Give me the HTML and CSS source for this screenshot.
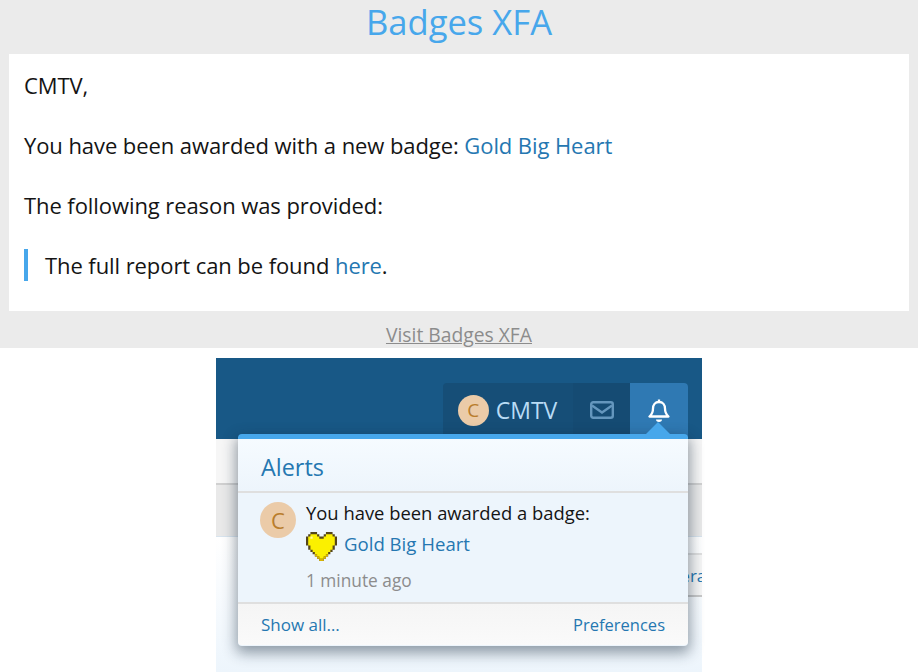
FILE: index.html
```html
<!DOCTYPE html>
<html lang="en">
<head>
  <meta charset="UTF-8">
  <title>Badges XFA</title>
  <link rel="stylesheet" href="styles.css">
</head>
<body>

<section class="email">
  <h1>Badges XFA</h1>
  <div class="email-body">
    <p>CMTV,</p>
    <p>You have been awarded with a new badge: <a href="#">Gold Big Heart</a></p>
    <p>The following reason was provided:</p>
    <blockquote>The full report can be found <a href="#">here</a>.</blockquote>
  </div>
  <a class="visit" href="#">Visit Badges XFA</a>
</section>

<section class="shot">
  <div class="site-header">
    <nav class="tabs">
      <a class="tab tab-user" href="#"><span class="avatar avatar-small">C</span>CMTV</a>
      <a class="tab tab-mail" href="#" aria-label="Inbox">
        <svg width="24" height="18" viewBox="0 0 24 18"><rect x="1.200" y="1.200" width="21.600" height="15.600" rx="2" fill="none" stroke="#6496bd" stroke-width="2.400"/><path d="M2 4.500l10 7 10-7" fill="none" stroke="#6496bd" stroke-width="2.400"/></svg>
      </a>
      <a class="tab tab-bell" href="#" aria-label="Alerts">
        <svg width="22" height="24" viewBox="0 0 22 24"><path d="M11 0.500v3M11 3c-4 0-6 3-6 6.500 0 4-1.200 6-3.500 8h19c-2.300-2-3.500-4-3.500-8C17 6 15 3 11 3z" fill="none" stroke="#fff" stroke-width="2.300" stroke-linejoin="round"/><path d="M8 20.500h6c0 1.500-1 2.500-3 2.500s-3-1-3-2.500z" fill="#fff"/></svg>
      </a>
    </nav>
  </div>
  <div class="strip-light"></div>
  <div class="strip-grey"></div>
  <div class="page-rest">
    <div class="behind-tab">General</div>
  </div>

  <div class="alerts">
    <span class="alerts-arrow"></span>
    <h3 class="alerts-title">Alerts</h3>
    <div class="alert-row">
      <span class="avatar avatar-big">C</span>
      <div class="alert-text">
        <div class="alert-line">You have been awarded a badge:</div>
        <div class="alert-badge">
          <svg class="heart" width="31" height="29" viewBox="1 1 14 13">
            <path d="M3 1h3v1h1v1h2V2h1V1h3v1h1v1h1v4h-1v2h-1v1h-1v1h-1v1h-1v1H9v1H7v-1H6v-1H5v-1H4v-1H3V9H2V7H1V3h1V2h1z" fill="#54451a"/>
            <path d="M3 2h3v1h1v1h2V3h1V2h3v1h1v4h-1v2h-1v1h-1v1h-1v1H9v1H7v-1H6v-1H5v-1H4V9H3V7H2V3h1z" fill="#fbf000"/>
            <path d="M4 11h1v1h1v1h1v1h2v-1h1v-1h1v-1h-1v1H9v1H7v-1H6v-1H4z" fill="#d8b400"/>
            <path d="M3 3h1v1H3z" fill="#fff6a8"/>
          </svg>
          <a href="#">Gold Big Heart</a>
        </div>
        <div class="alert-time">1 minute ago</div>
      </div>
    </div>
    <div class="alerts-foot">
      <a href="#">Show all…</a>
      <a class="foot-prefs" href="#">Preferences</a>
    </div>
  </div>
</section>

</body>
</html>
```

FILE: styles.css
```css
* {
  box-sizing: border-box;
}
body {
  font-family: "Open Sans", Arial, sans-serif;
  margin: 0;
  padding: 0;
  height: 672px;
  overflow: hidden;
  background: #fff;
  color: #141414;
}
a {
  color: #2577b1;
  text-decoration: none;
}

/* email part */
.email {
  background: #ebebeb;
  height: 348px;
  padding: 0 9px;
  text-align: center;
}
.email h1 {
  margin: 0;
  height: 54px;
  line-height: 44px;
  font-size: 34.600px;
  font-weight: 400;
  color: #47a7eb;
}
.email-body {
  background: #fff;
  height: 257px;
  padding: 16px 15px 0;
  text-align: left;
  font-size: 22px;
  line-height: 30px;
  letter-spacing: -0.08px;
}
.email-body p {
  margin: 0 0 30px;
}
.email-body blockquote {
  margin: -1px 0 0;
  padding: 1px 0 1px 17px;
  border-left: 4px solid #47a7eb;
}
.visit {
  display: block;
  margin-top: 11px;
  font-size: 19.300px;
  line-height: 25px;
  color: #8c8c8c;
  text-decoration: underline;
}

/* forum screenshot */
.shot {
  position: relative;
  width: 486px;
  height: 314px;
  margin: 10px 0 0 216px;
  background: #fff;
}
.site-header {
  height: 81px;
  background: #185886;
  padding: 25px 14px 0 227px;
}
.tabs {
  display: flex;
  height: 56px;
  background: #164e77;
  border-radius: 4px 4px 0 0;
}
.tab {
  display: flex;
  align-items: flex-start;
  justify-content: center;
  padding-top: 12px;
}
.tab-user {
  width: 130px;
  gap: 7px;
  font-size: 23px;
  line-height: 31px;
  color: #b9dcf5;
  padding-right: 1px;
}
.tab-mail {
  width: 57px;
  padding-top: 18px;
  background: #154b73;
}
.tab-bell {
  width: 58px;
  padding-top: 16px;
  background: #2f79b3;
  border-radius: 0 4px 0 0;
}
.avatar {
  display: flex;
  align-items: center;
  justify-content: center;
  border-radius: 50%;
  background: #ebcba8;
  color: #b97d2c;
  flex: none;
}
.avatar-small {
  width: 31px;
  height: 31px;
  font-size: 19px;
}
.avatar-big {
  width: 36px;
  height: 36px;
  margin-top: 1px;
  font-size: 22px;
}
.strip-light {
  height: 46px;
  background: #f6f6f6;
  border-bottom: 2px solid #d0d0d0;
}
.strip-grey {
  height: 52px;
  background: #e9e9e9;
  border-bottom: 1px solid #d8e4ee;
}
.page-rest {
  height: 135px;
  padding-top: 16px;
  background: linear-gradient(#fff, #edf5fc);
  display: flex;
  justify-content: flex-end;
}
.behind-tab {
  width: 60px;
  height: 44px;
  padding-left: 6px;
  white-space: nowrap;
  overflow: hidden;
  font-size: 17px;
  line-height: 42px;
  color: #2577b1;
  background: #f5f5f5;
  border-top: 2px solid #dfdfdf;
  border-bottom: 2px solid #c8c8c8;
}

/* alerts popup */
.alerts {
  position: absolute;
  left: 22px;
  top: 76px;
  width: 450px;
  height: 212px;
  background: #edf5fc;
  border-top: 5px solid #47a7eb;
  border-radius: 4px;
  box-shadow: 0 5px 14px 2px rgba(20, 40, 60, 0.45);
  font-size: 17px;
}
.alerts-arrow {
  position: absolute;
  top: -17px;
  left: 408px;
  border-left: 12px solid transparent;
  border-right: 12px solid transparent;
  border-bottom: 12px solid #47a7eb;
}
.alerts-title {
  margin: 0;
  height: 54px;
  padding: 12px 23px 0;
  font-size: 23.400px;
  line-height: 32px;
  font-weight: 400;
  color: #2577b1;
  background: linear-gradient(#f6fbff, #edf5fc);
  border-bottom: 2px solid #dfdfdf;
}
.alert-row {
  display: flex;
  gap: 10px;
  height: 109px;
  padding: 8px 22px 0;
}
.alert-line {
  line-height: 24px;
  font-size: 18.400px;
}
.alert-badge {
  display: flex;
  align-items: center;
  gap: 7px;
  height: 34px;
  margin-top: 4px;
  font-size: 18.600px;
}
.alert-badge a {
  position: relative;
  top: -3px;
}
.alert-time {
  margin-top: 6px;
  line-height: 24px;
  font-size: 17.300px;
  color: #8c8c8c;
}
.alerts-foot {
  display: flex;
  justify-content: space-between;
  align-items: center;
  height: 43px;
  padding: 0 23px 1px;
  background: linear-gradient(#f5f5f5, #fafafa);
  border-top: 2px solid #dfdfdf;
  border-radius: 0 0 4px 4px;
}
.foot-prefs {
  font-size: 16.500px;
}
```
